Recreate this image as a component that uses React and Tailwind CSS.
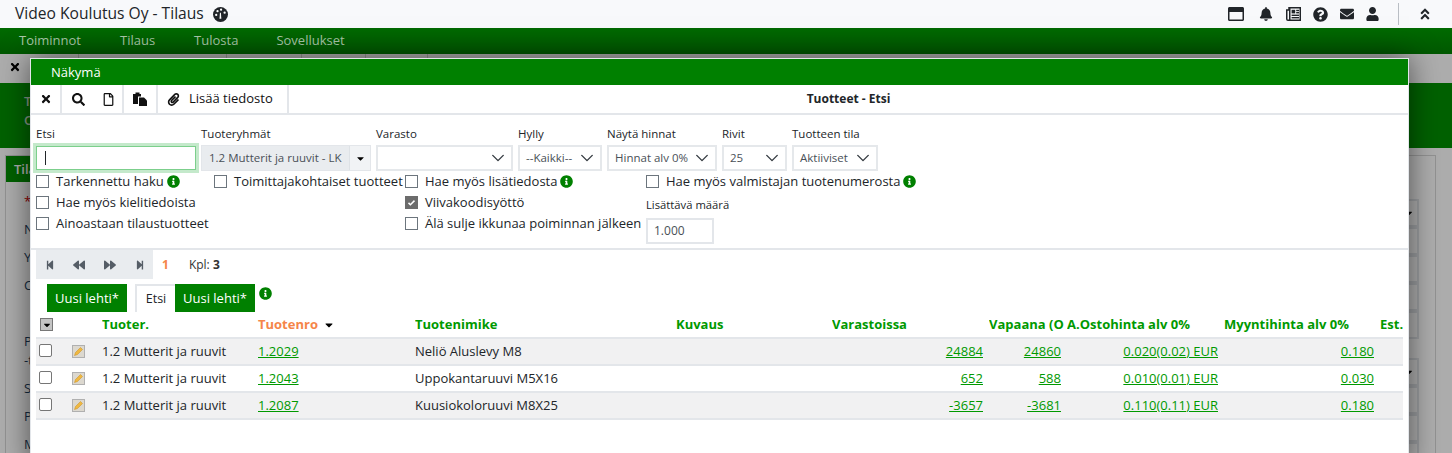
import React from 'react'
import {
  FaRegWindowMaximize, FaBell, FaQuestionCircle, FaEnvelope, FaUser, FaAngleDoubleUp,
  FaTimes, FaSearch, FaRegFile, FaPaperclip, FaStepBackward, FaBackward,
  FaForward, FaStepForward, FaInfoCircle, FaCaretDown,
} from 'react-icons/fa'

const Chevron = () => (
  <svg viewBox="0 0 16 16" className="w-[14px] h-[14px] shrink-0 text-[#343a40]">
    <path d="M2 5l6 6 6-6" fill="none" stroke="currentColor" strokeWidth="1.6" strokeLinecap="round" strokeLinejoin="round" />
  </svg>
)

const Gauge = () => (
  <svg viewBox="0 0 16 16" className="w-[15px] h-[15px] ml-[9px] shrink-0">
    <circle cx="8" cy="8" r="8" fill="#212529" />
    <circle cx="3.4" cy="8.4" r="1.2" fill="#fff" />
    <circle cx="4.8" cy="4.4" r="1.2" fill="#fff" />
    <circle cx="8.6" cy="2.9" r="1.2" fill="#fff" />
    <circle cx="12.4" cy="6" r="1.2" fill="#fff" />
    <path d="M6.9 12.4L7.4 6h1l.5 6.4z" fill="#fff" />
  </svg>
)

const Paste = () => (
  <svg viewBox="0 0 14 14" className="w-[14px] h-[14px] text-[#111]">
    <path d="M0 2h2.5V.5h4V2H8v2.5H5V12H0z" fill="currentColor" />
    <path d="M6 5.5h5l3 3V14H6z" fill="currentColor" />
  </svg>
)

const Newspaper = () => (
  <svg viewBox="0 0 15 14" className="w-[15px] h-[14px] ml-[13px] shrink-0">
    <path d="M3 .75h11.25v12.5H2A1.25 1.25 0 0 1 .75 12V3H3z" fill="none" stroke="#212529" strokeWidth="1.5" />
    <rect x="3" y="1" width="1.5" height="12" fill="#212529" />
    <rect x="5.6" y="2.8" width="3.6" height="3.6" fill="#212529" />
    <rect x="10.2" y="2.8" width="2.8" height="1.4" fill="#212529" />
    <rect x="10.2" y="5" width="2.8" height="1.4" fill="#212529" />
    <rect x="5.6" y="7.6" width="7.4" height="1.4" fill="#212529" />
    <rect x="5.6" y="10" width="7.4" height="1.4" fill="#212529" />
  </svg>
)

const Info = () => <FaInfoCircle className="w-[13px] h-[13px] text-[#008000] shrink-0" />

const Check = ({ label, info, checked }) => (
  <label className="flex items-center h-[21px] text-[13px] text-[#212529] whitespace-nowrap">
    {checked ? (
      <span className="w-[13px] h-[13px] bg-[#6c6c6c] flex items-center justify-center mr-[7px] shrink-0">
        <svg viewBox="0 0 12 12" className="w-[9px] h-[9px]"><path d="M2 6.5l2.5 2.5L10 3.5" fill="none" stroke="#fff" strokeWidth="2" /></svg>
      </span>
    ) : (
      <span className="w-[13px] h-[13px] border border-[#6c757d] bg-white mr-[7px] shrink-0" />
    )}
    {label}
    {info && <span className="ml-[3px]"><Info /></span>}
  </label>
)

const Field = ({ label, width, children }) => (
  <div className={`${width} shrink-0`}>
    <div className="text-[11.5px] leading-[16px] h-[20px] text-[#212529] whitespace-nowrap">{label}</div>
    {children}
  </div>
)

const Select = ({ value }) => (
  <div className="h-[26px] -mt-[1px] border-2 border-[#e5e8eb] bg-white flex items-center justify-between pl-[6px] pr-[6px] text-[11.5px] text-[#495057] whitespace-nowrap">
    <span>{value}</span>
    <Chevron />
  </div>
)

const Pencil = () => (
  <svg viewBox="0 0 13 13" className="w-[13px] h-[13px] block">
    <rect width="13" height="13" fill="#b0b0b0" />
    <rect x="1" y="1" width="11" height="11" fill="#dcd8cf" />
    <path d="M2.5 10.5l1-3 5-5 2 2-5 5z" fill="#f0b840" stroke="#c98f1c" strokeWidth=".5" />
  </svg>
)

const rows = [
  { no: '1.2029', name: 'Neliö Aluslevy M8', stock: '24884', free: '24860', cost: '0.020(0.02) EUR', price: '0.180' },
  { no: '1.2043', name: 'Uppokantaruuvi M5X16', stock: '652', free: '588', cost: '0.010(0.01) EUR', price: '0.030' },
  { no: '1.2087', name: 'Kuusiokoloruuvi M8X25', stock: '-3657', free: '-3681', cost: '0.110(0.11) EUR', price: '0.180' },
]

const Num = ({ children }) => (
  <td className="pr-[6px] text-right">
    <a className="text-[#009900] underline">{children}</a>
  </td>
)

const Th = ({ children }) => (
  <th className="text-left font-bold text-[13px] text-[#009900] p-0 overflow-hidden whitespace-nowrap">{children}</th>
)

const Modal = () => (
  <div className="absolute left-[30px] top-[58px] w-[1379px] h-[410px] bg-white border border-[#e3e6ea] shadow-[0_0_28px_rgba(0,0,0,0.55)]">
    <div className="h-[26px] bg-[#008000] text-white text-[13px] leading-[26px] pl-[20px]">Näkymä</div>

    <div className="h-[30px] flex items-center border-b-2 border-[#e3e6ea] text-[#111]">
      <div className="w-[31px] h-full border-r-2 border-[#e3e6ea] flex items-center justify-center">
        <FaTimes className="w-[12px] h-[12px]" />
      </div>
      <div className="w-[62px] h-full border-r-2 border-[#e3e6ea] flex items-center pl-[10px] gap-[18px]">
        <FaSearch className="w-[13px] h-[13px]" />
        <FaRegFile className="w-[11px] h-[13px]" />
      </div>
      <div className="w-[34px] h-full border-r-2 border-[#e3e6ea] flex items-center justify-center">
        <Paste />
      </div>
      <div className="w-[131px] h-full border-r-2 border-[#e3e6ea] flex items-center pl-[9px] gap-[9px] text-[13px]">
        <FaPaperclip className="w-[13px] h-[13px]" />
        Lisää tiedosto
      </div>
      <div className="flex-1 text-center text-[12px] font-bold text-[#212529]">Tuotteet - Etsi</div>
    </div>

    <div className="flex gap-[5px] pl-[5px] pt-[11px]">
      <Field label="Etsi" width="w-[160px]">
        <div className="h-[24px] bg-white border border-[#7ccf8c] shadow-[0_0_0_3px_rgba(124,207,140,0.45)] flex items-center pl-[8px]">
          <span className="w-px h-[14px] bg-[#212529]" />
        </div>
      </Field>
      <Field label="Tuoteryhmät" width="w-[170px]">
        <div className="h-[26px] -mt-[1px] flex border border-[#e3e6ea] bg-[#e9ecef] text-[11.5px] text-[#495057]">
          <div className="flex-1 pl-[7px] leading-[24px] whitespace-nowrap">1.2 Mutterit ja ruuvit - LK</div>
          <div className="w-[21px] bg-[#f1f3f5] border-l border-[#dee2e6] flex items-center justify-center">
            <FaCaretDown className="w-[11px] h-[11px] text-black" />
          </div>
        </div>
      </Field>
      <Field label="Varasto" width="w-[137px]"><Select value="" /></Field>
      <Field label="Hylly" width="w-[84px]"><Select value="--Kaikki--" /></Field>
      <Field label="Näytä hinnat" width="w-[110px]"><Select value="Hinnat alv 0%" /></Field>
      <Field label="Rivit" width="w-[65px]"><Select value="25" /></Field>
      <Field label="Tuotteen tila" width="w-[86px]"><Select value="Aktiiviset" /></Field>
    </div>

    <div className="grid grid-cols-[178px_191px_241px_1fr] grid-rows-[21px_21px_21px_14px] pl-[5px] h-[77px] border-b-2 border-[#e3e6ea] box-content">
      <div className="col-start-1 row-start-1"><Check label="Tarkennettu haku" info /></div>
      <div className="col-start-2 row-start-1"><Check label="Toimittajakohtaiset tuotteet" /></div>
      <div className="col-start-3 row-start-1"><Check label="Hae myös lisätiedosta" info /></div>
      <div className="col-start-4 row-start-1"><Check label="Hae myös valmistajan tuotenumerosta" info /></div>
      <div className="col-start-1 row-start-2"><Check label="Hae myös kielitiedoista" /></div>
      <div className="col-start-3 row-start-2"><Check label="Viivakoodisyöttö" checked /></div>
      <div className="col-start-1 row-start-3"><Check label="Ainoastaan tilaustuotteet" /></div>
      <div className="col-start-3 row-start-3"><Check label="Älä sulje ikkunaa poiminnan jälkeen" /></div>
      <div className="col-start-4 row-start-2 row-span-3 pt-[5px]">
        <div className="text-[11.25px] leading-[16px] h-[20px] text-[#212529]">Lisättävä määrä</div>
        <div className="w-[68px] h-[26px] border-2 border-[#e3e6ea] text-[12px] text-[#495057] pl-[6px] leading-[22px] mt-[1px]">1.000</div>
      </div>
    </div>

    <div className="flex items-center pl-[5px] h-[29px] text-[13px] text-[#333]">
      <div className="w-[117px] h-[29px] bg-[#e9ecef] flex items-center pl-[9px] text-[#555d66]">
        <FaStepBackward className="w-[10px] h-[10px]" />
        <FaBackward className="w-[14px] h-[12px] ml-[17px]" />
        <FaForward className="w-[14px] h-[12px] ml-[17px]" />
        <FaStepForward className="w-[10px] h-[10px] ml-[18px]" />
      </div>
      <span className="ml-[9px] font-bold text-[#f58549] text-[12px]">1</span>
      <span className="ml-[20px] text-[12px]">Kpl: <b>3</b></span>
    </div>

    <div className="flex items-start pl-[16px] mt-[5px] h-[28px] text-[13px]">
      <div className="w-[80px] h-[28px] bg-[#008000] text-white text-center leading-[28px]">Uusi lehti*</div>
      <div className="ml-[8px] w-[40px] h-[28px] border-l-2 border-t-2 border-[#e3e6ea] text-[#212529] text-center text-[12.5px] leading-[26px]">Etsi</div>
      <div className="w-[80px] h-[28px] bg-[#008000] text-white text-center leading-[28px]">Uusi lehti*</div>
      <span className="ml-[4px] mt-[3px]"><Info /></span>
    </div>

    <table className="ml-[5px] w-[1367px] table-fixed border-collapse text-[13px] text-[#212529]">
      <colgroup>
        <col className="w-[36px]" />
        <col className="w-[30px]" />
        <col className="w-[156px]" />
        <col className="w-[157px]" />
        <col className="w-[261px]" />
        <col className="w-[156px]" />
        <col className="w-[157px]" />
        <col className="w-[78px]" />
        <col className="w-[157px]" />
        <col className="w-[156px]" />
        <col className="w-[23px]" />
      </colgroup>
      <thead>
        <tr className="h-[26px] border-b-2 border-[#e3e6ea]">
          <th className="p-0">
            <span className="ml-[4px] w-[13px] h-[13px] bg-[#c4c4c4] border border-[#777] flex items-center justify-center">
              <FaCaretDown className="w-[10px] h-[10px] text-black" />
            </span>
          </th>
          <th className="p-0" />
          <Th>Tuoter.</Th>
          <th className="text-left font-bold text-[13px] text-[#f58549] p-0 whitespace-nowrap">
            <span className="inline-flex items-center gap-[5px]">Tuotenro <FaCaretDown className="w-[12px] h-[12px] text-black" /></span>
          </th>
          <Th>Tuotenimike</Th>
          <Th>Kuvaus</Th>
          <Th>Varastoissa</Th>
          <Th>Vapaana (O</Th>
          <Th>A.Ostohinta alv 0%</Th>
          <Th>Myyntihinta alv 0%</Th>
          <Th>Est.</Th>
        </tr>
      </thead>
      <tbody>
        {rows.map((r, i) => (
          <tr key={r.no} className={`h-[27px] border-b-2 border-[#e3e6ea] ${i % 2 === 0 ? 'bg-[#f1f1f2]' : 'bg-white'}`}>
            <td className="p-0"><span className="block ml-[3px] w-[13px] h-[13px] rounded-[2px] border border-[#767676] bg-white -mt-[3px]" /></td>
            <td className="p-0"><Pencil /></td>
            <td className="p-0">1.2 Mutterit ja ruuvit</td>
            <td className="p-0"><a className="text-[#009900] underline">{r.no}</a></td>
            <td className="p-0">{r.name}</td>
            <td className="p-0" />
            <Num>{r.stock}</Num>
            <Num>{r.free}</Num>
            <Num>{r.cost}</Num>
            <Num>{r.price}</Num>
            <td className="p-0" />
          </tr>
        ))}
      </tbody>
    </table>
  </div>
)

const BackRow = ({ label, caret, labelTop = 'top-[-7px]' }) => (
  <div className="h-[28px] flex justify-end relative">
    <span className={`absolute left-[18px] ${labelTop} text-[13px] text-[#1f3f5f]`}>{label}</span>
    <div className="w-[400px] h-[28px] border-2 border-[#e3e6ea] bg-white flex items-center justify-end pr-[3px]">
      {caret && <FaCaretDown className="w-[10px] h-[10px] text-black" />}
    </div>
  </div>
)

export default function App() {
  return (
    <div className="relative h-[453px] w-[1452px] overflow-hidden bg-white font-['Open_Sans',sans-serif]">
      <header className="h-[28px] bg-[#f8f9fb] flex items-center pl-[15px] text-[#212529]">
        <span className="text-[15.6px]">Video Koulutus Oy - Tilaus</span>
        <Gauge />
        <div className="ml-auto flex items-center h-full text-[#212529]">
          <FaRegWindowMaximize className="w-[16px] h-[16px]" />
          <FaBell className="w-[14px] h-[14px] ml-[15px]" />
          <Newspaper />
          <FaQuestionCircle className="w-[15px] h-[15px] ml-[12px]" />
          <FaEnvelope className="w-[14px] h-[14px] ml-[12px]" />
          <FaUser className="w-[13px] h-[14px] ml-[12px]" />
          <span className="w-px h-[22px] bg-[#b9bec4] ml-[19px]" />
          <FaAngleDoubleUp className="w-[12px] h-[14px] ml-[20px] mr-[21px]" />
        </div>
      </header>

      <nav className="h-[26px] bg-gradient-to-b from-[#006a00] to-[#005800] flex items-center text-[13px] text-[#a9c8a9] pl-[19px] gap-[39px]">
        <span>Toiminnot</span>
        <span>Tilaus</span>
        <span className="mr-[-1px]">Tulosta</span>
        <span>Sovellukset</span>
      </nav>

      <div className="h-[29px] bg-white flex">
        <div className="w-[79px] border-r border-[#d8d8d8] pl-[9px] pt-[7px]"><FaTimes className="w-[12px] h-[12px] text-black relative z-20" /></div>
        <div className="w-[148px] border-r border-[#d8d8d8]" />
        <div className="w-[75px] border-r border-[#d8d8d8]" />
        <div className="w-[64px] border-r border-[#d8d8d8]" />
        <div className="w-[62px] border-r border-[#d8d8d8]" />
      </div>

      <div className="h-[65px] bg-[#009000] pl-[24px] pt-[9px] text-[13px] leading-[19px] font-semibold text-[#c5dcc5]">
        <div>Tilaus</div>
        <div>Oy</div>
      </div>

      <div className="mx-[5px] mt-[7px] w-[1431px] h-[300px] border border-[#d8d8d8]">
        <div className="w-[90px] h-[26px] bg-[#009000] text-white text-[13px] leading-[26px] pl-[8px] font-semibold">Tilaus</div>
        <div className="pt-[17px] pr-[16px]">
          <BackRow label={<span className="text-[#c00]">*</span>} caret />
          <BackRow label="Nimi" />
          <BackRow label="Y-tunnus" />
          <BackRow label="C/O" />
          <BackRow label="" />
          <div className="h-[19px]" />
          <BackRow label={<span className="block leading-[19px]">Puh<br />-t</span>} caret labelTop="top-[-26px]" />
          <BackRow label="Sähköposti" />
          <BackRow label="Postiosoite" />
          <BackRow label="Maa" />
        </div>
      </div>

      {/* tumma tausta modaalin alla */}
      <div className="absolute inset-x-0 top-[54px] bottom-0 bg-black/[.32]" />
      <Modal />
    </div>
  )
}
